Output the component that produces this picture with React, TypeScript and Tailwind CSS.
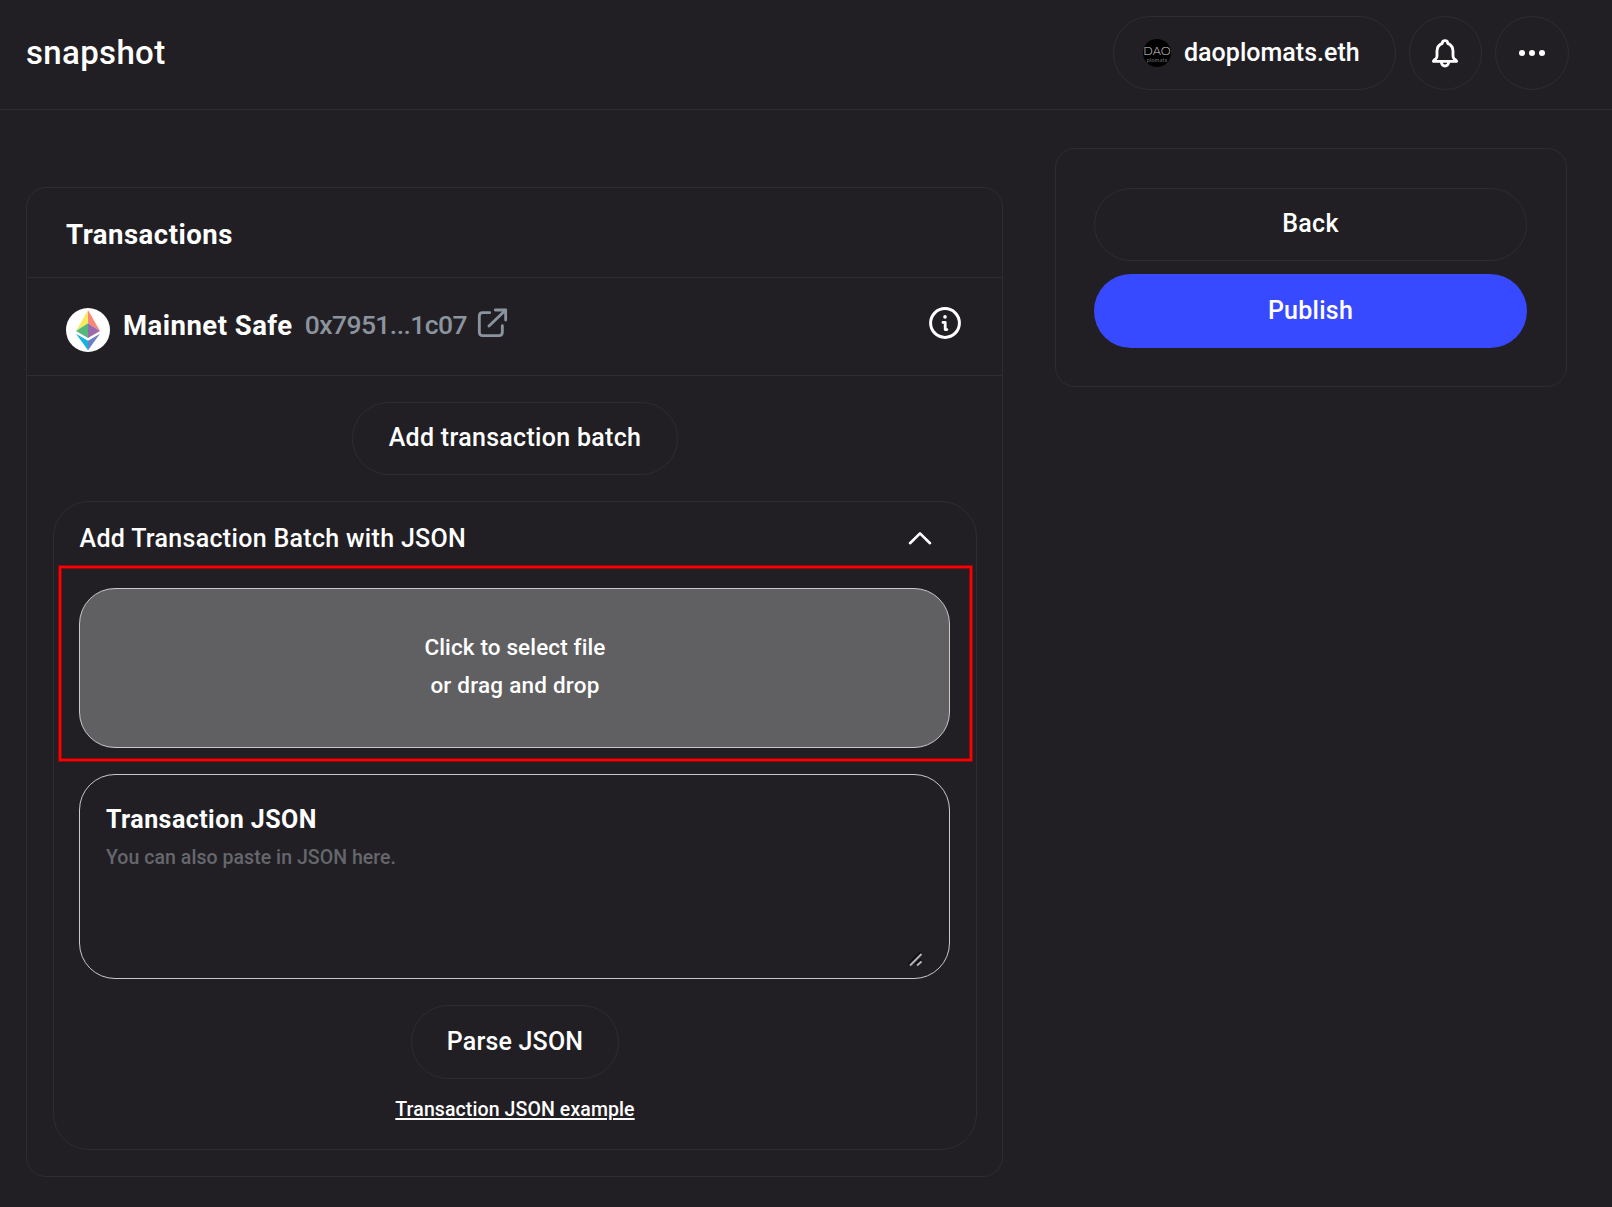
import type { ReactNode } from "react";

const pill =
  "flex h-[73px] items-center justify-center rounded-[37px] border border-[#2d2d2d] pb-0.5 text-[25px] font-medium leading-none tracking-[0.3px]";

function BellIcon() {
  return (
    <svg className="h-[31px] w-7" viewBox="0 0 84 93" fill="none" stroke="currentColor" strokeWidth="8.5" strokeLinecap="round" strokeLinejoin="round">
      <path d="M34 16C34 5 50 5 50 16C60 20 66 28 66 40V54Q66 60 70 63Q75 66 77 70H7Q9 66 14 63Q18 60 18 54V40C18 28 24 20 34 16Z" />
      <path d="M31 72C31 88 53 88 53 72" />
    </svg>
  );
}

function EthereumLogo() {
  return (
    <svg className="mt-[30px] h-11 w-11 shrink-0" viewBox="0 0 132 132">
      <circle cx="66" cy="66" r="66" fill="#fff" />
      <path d="M66 6L30 69L66 46Z" fill="#f9ea62" />
      <path d="M66 6L102 69L66 46Z" fill="#fa8676" />
      <path d="M30 69L66 46V90Z" fill="#54b87c" />
      <path d="M102 69L66 46V90Z" fill="#9c69ac" />
      <path d="M30 77L66 98V127Z" fill="#17b3dc" />
      <path d="M102 77L66 98V127Z" fill="#6c80c3" />
    </svg>
  );
}

function ExternalLinkIcon() {
  return (
    <svg className="h-[31px] w-8" viewBox="0 0 96 93" fill="none" stroke="currentColor" strokeWidth="8.5" strokeLinecap="round" strokeLinejoin="round">
      <path d="M38 14H17Q7 14 7 24V73Q7 83 17 83H66Q76 83 76 73V53" />
      <path d="M36 54L86 6M55 6H86V36" />
    </svg>
  );
}

function InfoIcon() {
  return (
    <svg className="h-8 w-8" viewBox="0 0 32 32" fill="none" stroke="currentColor" strokeLinecap="round" strokeLinejoin="round">
      <circle cx="16" cy="16" r="14.4" strokeWidth="3" />
      <circle cx="16" cy="9.9" r="1.8" fill="currentColor" stroke="none" />
      <path d="M14 15.4H16.2V22.6H17.9" strokeWidth="2.8" />
    </svg>
  );
}

function Avatar() {
  return (
    <span className="flex h-7 w-7 shrink-0 flex-col items-center justify-center overflow-hidden rounded-full bg-black font-['Lato'] font-light leading-none text-[#d0d0d0]">
      <span className="text-[12.5px] leading-[13px]">DAO</span>
      <span className="text-[5.5px] leading-[6px] tracking-[0.3px] text-[#c8c8c8]">plomats</span>
    </span>
  );
}

function CircleButton({ children }: { children: ReactNode }) {
  return (
    <button className="flex h-[74px] w-[74px] items-center justify-center rounded-full border border-[#2d2d2d]">{children}</button>
  );
}

export default function App() {
  return (
    <div className="min-h-[1207px] w-[1612px] bg-[#211f24] font-['Roboto',sans-serif] text-white">
      <header className="flex h-[110px] items-start justify-between border-b border-[#2d2d2d] pl-[26px] pr-[43px] pt-4">
        <div className="flex h-[72px] items-center text-[33px] font-medium leading-none tracking-[0.35px]">snapshot</div>
        <div className="flex">
          <button className="mr-[13px] flex h-[74px] w-[283px] items-center gap-[13px] rounded-full border border-[#2d2d2d] pl-[29px] text-[25px] font-medium leading-none tracking-[0.03px]">
            <Avatar />
            <span className="pb-0.5">daoplomats.eth</span>
          </button>
          <div className="flex gap-3">
            <button className="mr-px flex h-[74px] w-[73px] items-center justify-center rounded-full border border-[#2d2d2d] pr-px"><BellIcon /></button>
            <CircleButton>
              <span className="flex gap-1">
                <span className="h-1.5 w-1.5 rounded-full bg-white" />
                <span className="h-1.5 w-1.5 rounded-full bg-white" />
                <span className="h-1.5 w-1.5 rounded-full bg-white" />
              </span>
            </CircleButton>
          </div>
        </div>
      </header>

      <main className="flex items-start pl-[26px]">
        <section className="mt-[77px] h-[990px] w-[977px] rounded-[20px] border border-[#2d2d2d]">
          <h2 className="flex h-[90px] items-center border-b border-[#2d2d2d] pl-[39px] pt-1 text-[27.5px] font-bold leading-none tracking-[0.52px]">Transactions</h2>

          <div className="flex h-[98px] items-start border-b border-[#2d2d2d] pl-[39px] pr-[41px]">
            <EthereumLogo />
            <span className="ml-[13px] mt-[34px] text-[27.5px] font-bold leading-7 tracking-[0.48px]">Mainnet Safe</span>
            <a className="ml-3 mt-[30px] flex gap-2.5 text-[#8b949e]">
              <span className="mt-[3px] text-[26.5px] font-medium leading-7 tracking-[-0.58px]">0x7951...1c07</span>
              <ExternalLinkIcon />
            </a>
            <button className="ml-auto mt-[29px]"><InfoIcon /></button>
          </div>

          <div className="flex flex-col items-center pt-[26px]">
            <button className={`${pill} w-[326px] pl-px`}>Add transaction batch</button>

            <div className="relative mt-[26px] flex h-[649px] w-[924px] flex-col items-center rounded-[36px] border border-[#2d2d2d]">
              <div className="flex h-[86px] w-full items-start justify-between pl-[26px] pr-11">
                <h3 className="mt-[23px] text-[25px] font-medium leading-[27px] tracking-[0.31px]">Add Transaction Batch with JSON</h3>
                <svg className="mt-7 h-[17px] w-6" viewBox="0 0 24 17" fill="none" stroke="#fff" strokeWidth="2.6" strokeLinecap="round" strokeLinejoin="round">
                  <path d="M2 13.2L12 3.4L22 13.2" />
                </svg>
              </div>

              <div className="flex h-40 w-[871px] flex-col items-center justify-center rounded-[36px] border border-[#c9c9ca] bg-[#606062] pb-1 pl-px text-[22.5px] font-medium leading-[38px]">
                <span className="tracking-[0.13px]">Click to select file</span>
                <span className="tracking-[0.22px]">or drag and drop</span>
              </div>

              <div className="relative mt-[26px] h-[205px] w-[871px] rounded-[36px] border border-[#c9c9ca] pl-[26px] pt-[31px]">
                <div className="text-[25px] font-bold leading-[28px] tracking-[0.45px]">Transaction JSON</div>
                <div className="mt-3 text-[19.5px] font-medium leading-6 tracking-[0.05px] text-[#66676d]">You can also paste in JSON here.</div>
                <svg className="absolute bottom-[11px] right-[26px] h-[15px] w-[15px]" viewBox="0 0 15 15" fill="none">
                  <path d="M0.5 12.5L13 0M7.5 12.5L13 7.5" stroke="#0c0b0e" strokeWidth="2" />
                  <path d="M2 13.5L13.5 2M9 13.5L13.5 9.5" stroke="#b4b4b6" strokeWidth="2" />
                </svg>
              </div>

              <button className="mt-[26px] flex h-[74px] w-[208px] items-center justify-center rounded-full border border-[#2d2d2d] pb-px pl-px text-[25px] font-medium leading-none tracking-[0.2px]">Parse JSON</button>
              <a className="ml-px mt-[19px] text-[19.5px] font-medium leading-6 tracking-[0.1px] underline decoration-2 underline-offset-2">Transaction JSON example</a>

              <div className="pointer-events-none absolute left-[5px] top-16 h-[195px] w-[913px] border-2 border-[#ff0000] shadow-[0_0_0_1px_#8f0a10,inset_0_0_0_1px_#8f0a10]" />
            </div>
          </div>
        </section>

        <aside className="ml-[52px] mt-[38px] flex h-[239px] w-[512px] flex-col gap-[13px] rounded-[20px] border border-[#2d2d2d] pl-[38px] pr-[39px] pt-[39px]">
          <button className={pill}>Back</button>
          <button className="flex h-[74px] items-center justify-center rounded-[37px] bg-[#384aff] pb-0.5 text-[25px] font-medium leading-none tracking-[0.25px]">Publish</button>
        </aside>
      </main>
    </div>
  );
}
